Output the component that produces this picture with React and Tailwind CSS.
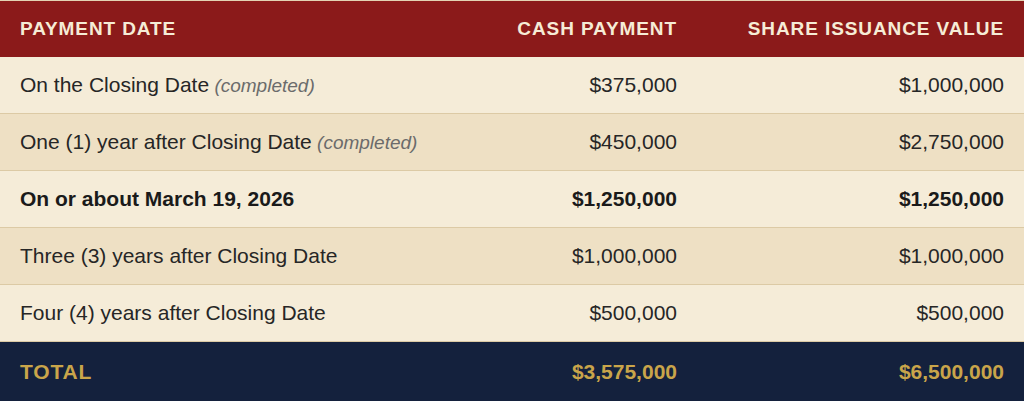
import React from 'react';

const rows = [
    { date: 'On the Closing Date', note: '(completed)', cash: '$375,000', share: '$1,000,000' },
    { date: 'One (1) year after Closing Date', note: '(completed)', cash: '$450,000', share: '$2,750,000' },
    { date: 'On or about March 19, 2026', cash: '$1,250,000', share: '$1,250,000', bold: true },
    { date: 'Three (3) years after Closing Date', cash: '$1,000,000', share: '$1,000,000' },
    { date: 'Four (4) years after Closing Date', cash: '$500,000', share: '$500,000' },
];

const App = () => {
    return (
        <div className="w-[1024px] h-[401px] overflow-hidden bg-[#f5ecd8] font-['Liberation_Sans',Arial,sans-serif]">
            {/* Header */}
            <div className="grid grid-cols-[440px_257px_327px] h-[57px] items-center bg-[#8b1a1a] border-t border-[#e3d3b3] text-[#f6ecd6] text-[19px] font-bold tracking-[0.9px] uppercase">
                <div className="px-5">Payment Date</div>
                <div className="px-5 text-right">Cash Payment</div>
                <div className="px-5 text-right">Share Issuance Value</div>
            </div>

            {/* Rows */}
            {rows.map((r, i) => (
                <div
                    key={i}
                    className={`grid grid-cols-[440px_257px_327px] h-[57px] items-center border-b border-[#dccaa5] text-[21px] ${i % 2 === 0 ? 'bg-[#f5ecd8]' : 'bg-[#eee0c4]'} ${r.bold ? 'font-bold text-[#1a1a1a]' : 'text-[#262626]'}`}
                >
                    <div className="px-5 whitespace-nowrap">
                        {r.date}
                        {r.note && <span className="italic text-[#6b6b6b] text-[19px]"> {r.note}</span>}
                    </div>
                    <div className="px-5 text-right">{r.cash}</div>
                    <div className="px-5 text-right">{r.share}</div>
                </div>
            ))}

            {/* Total */}
            <div className="grid grid-cols-[440px_257px_327px] h-[60px] items-center bg-[#14213d] text-[#c9a54a] text-[21px] font-bold">
                <div className="px-5 tracking-[0.8px]">TOTAL</div>
                <div className="px-5 text-right">$3,575,000</div>
                <div className="px-5 text-right">$6,500,000</div>
            </div>
        </div>
    );
};

export default App;
